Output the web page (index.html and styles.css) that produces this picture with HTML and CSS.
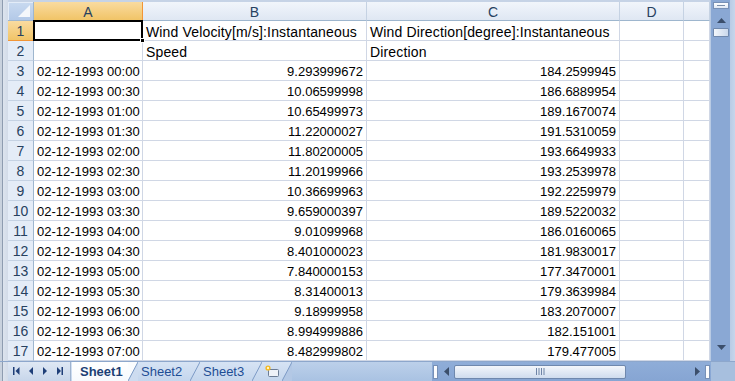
FILE: index.html
```html
<!DOCTYPE html>
<html>
<head>
<meta charset="utf-8">
<link rel="stylesheet" href="styles.css">
</head>
<body>
<div class="app">
  <div class="main">
    <div class="leftstrip"></div>
    <div class="sheet">
      <div class="topstrip"></div>
      <div class="grid">
        <div class="corner"><svg width="12" height="12" viewBox="0 0 12 12"><polygon points="12,0 12,12 0,12" fill="#f4f7fb"/></svg></div>
        <div class="ch sel">A</div>
        <div class="ch">B</div>
        <div class="ch">C</div>
        <div class="ch">D</div>
        <div class="ch last"></div>

        <div class="rh sel">1</div>
        <div class="c active"><span class="handle"></span></div>
        <div class="c t">Wind Velocity[m/s]:Instantaneous</div>
        <div class="c t">Wind Direction[degree]:Instantaneous</div>
        <div class="c"></div>
        <div class="c"></div>

        <div class="rh">2</div>
        <div class="c"></div>
        <div class="c t">Speed</div>
        <div class="c t">Direction</div>
        <div class="c"></div>
        <div class="c"></div>

        <div class="rh">3</div><div class="c">02-12-1993 00:00</div><div class="c n">9.293999672</div><div class="c n">184.2599945</div><div class="c"></div><div class="c"></div>
        <div class="rh">4</div><div class="c">02-12-1993 00:30</div><div class="c n">10.06599998</div><div class="c n">186.6889954</div><div class="c"></div><div class="c"></div>
        <div class="rh">5</div><div class="c">02-12-1993 01:00</div><div class="c n">10.65499973</div><div class="c n">189.1670074</div><div class="c"></div><div class="c"></div>
        <div class="rh">6</div><div class="c">02-12-1993 01:30</div><div class="c n">11.22000027</div><div class="c n">191.5310059</div><div class="c"></div><div class="c"></div>
        <div class="rh">7</div><div class="c">02-12-1993 02:00</div><div class="c n">11.80200005</div><div class="c n">193.6649933</div><div class="c"></div><div class="c"></div>
        <div class="rh">8</div><div class="c">02-12-1993 02:30</div><div class="c n">11.20199966</div><div class="c n">193.2539978</div><div class="c"></div><div class="c"></div>
        <div class="rh">9</div><div class="c">02-12-1993 03:00</div><div class="c n">10.36699963</div><div class="c n">192.2259979</div><div class="c"></div><div class="c"></div>
        <div class="rh">10</div><div class="c">02-12-1993 03:30</div><div class="c n">9.659000397</div><div class="c n">189.5220032</div><div class="c"></div><div class="c"></div>
        <div class="rh">11</div><div class="c">02-12-1993 04:00</div><div class="c n">9.01099968</div><div class="c n">186.0160065</div><div class="c"></div><div class="c"></div>
        <div class="rh">12</div><div class="c">02-12-1993 04:30</div><div class="c n">8.401000023</div><div class="c n">181.9830017</div><div class="c"></div><div class="c"></div>
        <div class="rh">13</div><div class="c">02-12-1993 05:00</div><div class="c n">7.840000153</div><div class="c n">177.3470001</div><div class="c"></div><div class="c"></div>
        <div class="rh">14</div><div class="c">02-12-1993 05:30</div><div class="c n">8.31400013</div><div class="c n">179.3639984</div><div class="c"></div><div class="c"></div>
        <div class="rh">15</div><div class="c">02-12-1993 06:00</div><div class="c n">9.18999958</div><div class="c n">183.2070007</div><div class="c"></div><div class="c"></div>
        <div class="rh">16</div><div class="c">02-12-1993 06:30</div><div class="c n">8.994999886</div><div class="c n">182.151001</div><div class="c"></div><div class="c"></div>
        <div class="rh">17</div><div class="c">02-12-1993 07:00</div><div class="c n">8.482999802</div><div class="c n">179.477005</div><div class="c"></div><div class="c"></div>
      </div>
    </div>
    <div class="vscroll">
      <div class="vsplit"></div>
      <div class="varrow up"><svg width="9" height="5" viewBox="0 0 9 5"><polygon points="4.5,0 9,5 0,5" fill="#3b4e6b"/></svg></div>
      <div class="vthumb"></div>
      <div class="vtrack"></div>
      <div class="varrow down"><svg width="9" height="5" viewBox="0 0 9 5"><polygon points="0,0 9,0 4.5,5" fill="#3b4e6b"/></svg></div>
    </div>
  </div>
  <div class="bottom">
    <div class="leftstrip2"></div>
    <div class="nav">
      <svg width="62" height="12" viewBox="0 0 62 12">
        <rect x="5" y="2" width="1.5" height="8" fill="#1f3f78"/>
        <polygon points="11.5,2 11.5,10 7.5,6" fill="#1f3f78"/>
        <polygon points="25,2 25,10 21,6" fill="#1f3f78"/>
        <polygon points="35,2 35,10 39,6" fill="#1f3f78"/>
        <polygon points="49,2 49,10 53,6" fill="#1f3f78"/>
        <rect x="53.5" y="2" width="1.5" height="8" fill="#1f3f78"/>
      </svg>
    </div>
    <div class="tabs">
      <div class="tab active">Sheet1</div>
      <svg class="sep" width="10" height="19" viewBox="0 0 10 19"><polygon points="0,0 10,0 0,19" fill="#fafcfe"/><polygon points="10,0 10,19 0,19" fill="#cddcf0"/><line x1="0" y1="19" x2="10" y2="0" stroke="#7d9bc6" stroke-width="1"/></svg>
      <div class="tab">Sheet2</div>
      <svg class="sep" width="10" height="19" viewBox="0 0 10 19"><line x1="0" y1="19" x2="10" y2="0" stroke="#7d9bc6" stroke-width="1"/></svg>
      <div class="tab">Sheet3</div>
      <svg class="sep" width="10" height="19" viewBox="0 0 10 19"><line x1="0" y1="19" x2="10" y2="0" stroke="#7d9bc6" stroke-width="1"/></svg>
      <div class="newtab">
        <svg width="18" height="15" viewBox="0 0 18 15">
          <rect x="5.5" y="5.5" width="10" height="7" rx="1" fill="#eef2f8" stroke="#6b7c94" stroke-width="1"/>
          <circle cx="5" cy="4" r="2.6" fill="#f5b820"/>
          <circle cx="5" cy="4" r="1.2" fill="#fff6c8"/>
        </svg>
      </div>
      <svg class="sep" width="10" height="19" viewBox="0 0 10 19"><polygon points="10,0 10,19 0,19" fill="#b3c8e5"/><line x1="0" y1="19" x2="10" y2="0" stroke="#7d9bc6" stroke-width="1"/></svg>
      <div class="tabfill"></div>
    </div>
    <div class="hscroll">
      <div class="hsplit"></div>
      <div class="harrow"><svg width="5" height="9" viewBox="0 0 5 9"><polygon points="5,0 5,9 0,4.5" fill="#3b4e6b"/></svg></div>
      <div class="hthumb"><svg width="9" height="7" viewBox="0 0 9 7"><rect x="0" y="0" width="1" height="7" fill="#6d83a6"/><rect x="2.5" y="0" width="1" height="7" fill="#6d83a6"/><rect x="5" y="0" width="1" height="7" fill="#6d83a6"/><rect x="7.5" y="0" width="1" height="7" fill="#6d83a6"/></svg></div>
      <div class="htrack"></div>
      <div class="harrow"><svg width="5" height="9" viewBox="0 0 5 9"><polygon points="0,0 0,9 5,4.5" fill="#3b4e6b"/></svg></div>
      <div class="hsplit"></div>
    </div>
    <div class="cornerfill"></div>
  </div>
</div>
</body>
</html>
```

FILE: styles.css
```css
* { box-sizing: border-box; }
html, body {
  margin: 0;
  padding: 0;
  width: 735px;
  height: 381px;
  overflow: hidden;
  background: #a7bfde;
  font-family: "Liberation Sans", Arial, sans-serif;
}
.app {
  display: flex;
  flex-direction: column;
  width: 735px;
  height: 381px;
}
.main {
  display: flex;
  height: 361px;
}
.leftstrip {
  width: 8px;
  background: linear-gradient(to right, #c9d2de 0, #c9d2de 2px, #8e9cb0 2px, #8e9cb0 3px, #dde4ee 3px, #d2dbe8 8px);
}
.sheet {
  width: 702px;
  display: flex;
  flex-direction: column;
  background: #fff;
  overflow: hidden;
}
.topstrip {
  height: 2px;
  background: #c6d3e6;
}
.grid {
  display: grid;
  grid-template-columns: 26px 109px 224px 253px 64px 26px;
  grid-template-rows: 19px repeat(17, 20px);
}
.corner {
  background: linear-gradient(#c9daf0, #b3c9e8);
  border-right: 1px solid #9eb6ce;
  border-bottom: 1px solid #9eb6ce;
  box-shadow: inset 1px 1px 0 #e3ecf8;
  display: flex;
  align-items: flex-end;
  justify-content: flex-end;
  padding: 0 3px 3px 0;
}
.corner svg { display: block; }
.ch {
  background: linear-gradient(#f1f5fb, #dfe7f3);
  border-right: 1px solid #c5d2e3;
  border-bottom: 1px solid #9eb6ce;
  color: #27415f;
  font-size: 14px;
  display: flex;
  align-items: center;
  justify-content: center;
  padding-top: 1px;
}
.ch.sel {
  background: linear-gradient(#f9dba0, #f1c467);
  border-bottom: 1px solid #f29536;
  border-right: 1px solid #f29536;
}
.rh {
  background: #e4ecf7;
  border-right: 1px solid #9eb6ce;
  border-bottom: 1px solid #c5d2e3;
  color: #27415f;
  font-size: 14px;
  display: flex;
  align-items: center;
  justify-content: center;
  padding-top: 1px;
}
.rh.sel {
  background: linear-gradient(#f9dba0, #f1c467);
  border-bottom: 1px solid #f29536;
  border-right: 1px solid #f29536;
}
.c {
  border-right: 1px solid #d0d7e5;
  border-bottom: 1px solid #d0d7e5;
  font-size: 13px;
  color: #000;
  white-space: nowrap;
  overflow: visible;
  padding: 3px 3px 0 3px;
  line-height: 16px;
  position: relative;
}
.c.t {
  font-size: 14px;
  letter-spacing: 0.15px;
  padding-top: 3px;
}
.c.n { text-align: right; }
.c.active {
  border: 2px solid #000;
  margin: -1px 0 0 -1px;
  width: 110px;
  height: 21px;
  z-index: 2;
}
.handle {
  position: absolute;
  right: -4px;
  bottom: -4px;
  width: 5px;
  height: 5px;
  background: #000;
  border: 1px solid #fff;
}
.vscroll {
  width: 25px;
  display: flex;
  flex-direction: column;
  background: linear-gradient(to right, #8aa8d4 0, #8aa8d4 19px, #b9cce6 19px, #c9d8ec 25px);
  padding: 2px 6px 0 2px;
  border-left: 1px solid #b9cbe4;
}
.vsplit {
  height: 7px;
  background: linear-gradient(#fdfeff, #dfe8f4);
  border: 1px solid #7790b6;
  position: relative;
}
.vsplit::after {
  content: "";
  position: absolute;
  left: 3px;
  right: 3px;
  top: 2px;
  height: 1px;
  background: #7b8ea9;
}
.varrow {
  height: 15px;
  display: flex;
  align-items: center;
  justify-content: center;
}
.varrow.up { margin-top: 4px; }
.vthumb {
  height: 9px;
  background: linear-gradient(to right, #f2f6fb, #cad8ec);
  border: 1px solid #6f88ad;
  border-radius: 1px;
}
.vtrack { flex: 1; }
.varrow.down { margin-bottom: 6px; }
.bottom {
  display: flex;
  height: 20px;
  background: #a7bfde;
  border-top: 1px solid #8da7cc;
}
.leftstrip2 {
  width: 8px;
  background: linear-gradient(to right, #c9d2de 0, #c9d2de 2px, #8e9cb0 2px, #8e9cb0 3px, #dde4ee 3px, #d2dbe8 8px);
}
.nav {
  width: 63px;
  background: linear-gradient(#dfe8f4, #c7d6ea);
  border-right: 1px solid #9fb3cf;
  display: flex;
  align-items: center;
  padding-bottom: 1px;
}
.nav svg { display: block; }
.tabs {
  display: flex;
  width: 361px;
  height: 19px;
  background: linear-gradient(#d6e3f4, #c4d6ed);
  padding-left: 1px;
}
.sep { display: block; flex: none; }
.tab {
  font-size: 13px;
  color: #1e4d94;
  padding: 2px 0 0 3px;
  width: 52px;
  height: 19px;
  line-height: 16px;
  flex: none;
}
.tab.active {
  width: 56px;
  padding-left: 8px;
  background: linear-gradient(#ffffff, #f6f9fd);
  color: #1d3f75;
  font-weight: bold;
}
.newtab {
  width: 20px;
  padding: 2px 0 0 1px;
  flex: none;
}
.newtab svg { display: block; }
.tabfill {
  flex: 1;
  background: linear-gradient(#bcd0ea, #a9c2e2);
}
.hscroll {
  width: 279px;
  display: flex;
  align-items: center;
  background: linear-gradient(#8fadd8, #86a5d3);
  padding: 0 1px;
}
.hsplit {
  width: 5px;
  height: 14px;
  background: #fbfcfe;
  border: 1px solid #7790b6;
}
.harrow {
  width: 16px;
  display: flex;
  align-items: center;
  justify-content: center;
}
.hthumb {
  width: 172px;
  height: 14px;
  background: linear-gradient(#f3f6fb, #cfdcee);
  border: 1px solid #6f88ad;
  border-radius: 2px;
  display: flex;
  align-items: center;
  justify-content: center;
}
.hthumb svg { display: block; }
.htrack { flex: 1; }
.cornerfill {
  flex: 1;
  background: #a7bfde;
}
```
